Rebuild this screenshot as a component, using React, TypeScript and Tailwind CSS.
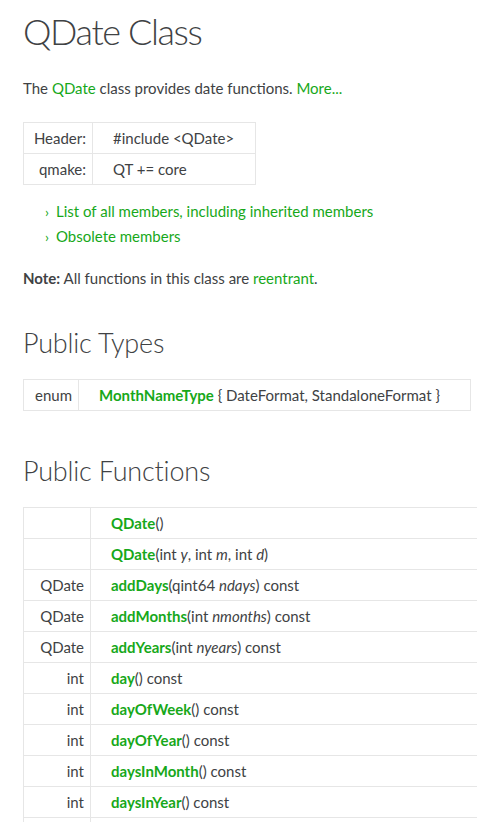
const font = { fontFamily: "Lato, 'Open Sans', sans-serif" };

type Fn = { ret: string; parts: (string | { i: string } | { b: string })[] };

const functions: Fn[] = [
  { ret: "", parts: [{ b: "QDate" }, "()"] },
  { ret: "", parts: [{ b: "QDate" }, "(int ", { i: "y" }, ", int ", { i: "m" }, ", int ", { i: "d" }, ")"] },
  { ret: "QDate", parts: [{ b: "addDays" }, "(qint64 ", { i: "ndays" }, ") const"] },
  { ret: "QDate", parts: [{ b: "addMonths" }, "(int ", { i: "nmonths" }, ") const"] },
  { ret: "QDate", parts: [{ b: "addYears" }, "(int ", { i: "nyears" }, ") const"] },
  { ret: "int", parts: [{ b: "day" }, "() const"] },
  { ret: "int", parts: [{ b: "dayOfWeek" }, "() const"] },
  { ret: "int", parts: [{ b: "dayOfYear" }, "() const"] },
  { ret: "int", parts: [{ b: "daysInMonth" }, "() const"] },
  { ret: "int", parts: [{ b: "daysInYear" }, "() const"] },
  { ret: "", parts: [] },
];

export default function App() {
  return (
    <div className="h-[822px] bg-white text-[#404244] overflow-hidden" style={font}>
      <div className="pl-[23px]">
        {/* Title */}
        <h1 className="pt-[9px] text-[36px] font-light leading-[44px] tracking-[-1.4px]">QDate Class</h1>

        <p className="mt-[23px] text-[15px] leading-[24px]">
          The <a className="text-[#17a81a]">QDate</a> class provides date functions.{" "}
          <a className="text-[#17a81a]">More...</a>
        </p>

        {/* Header / qmake */}
        <table className="mt-[22px] border-collapse text-[15px]">
          <tbody>
            <tr className="h-[31px]">
              <td className="border border-[#e6e6e6] w-[69px] text-right pr-[6px]">Header:</td>
              <td className="border border-[#e6e6e6] w-[163px] pl-[20px]">#include &lt;QDate&gt;</td>
            </tr>
            <tr className="h-[31px]">
              <td className="border border-[#e6e6e6] text-right pr-[6px]">qmake:</td>
              <td className="border border-[#e6e6e6] pl-[20px]">QT += core</td>
            </tr>
          </tbody>
        </table>

        <ul className="mt-[14px] pl-[22px] text-[15px] text-[#17a81a]">
          <li className="flex items-center h-[25px]">
            <span className="w-[11px] text-[14px]">›</span>List of all members, including inherited members
          </li>
          <li className="flex items-center h-[25px]">
            <span className="w-[11px] text-[14px]">›</span>Obsolete members
          </li>
        </ul>

        <p className="mt-[17px] text-[15px] leading-[24px]">
          <b className="font-bold">Note:</b> All functions in this class are{" "}
          <a className="text-[#17a81a]">reentrant</a>.
        </p>

        <h2 className="mt-[35px] text-[27px] font-light leading-[36px] tracking-[-0.2px]">Public Types</h2>

        <table className="mt-[18px] border-collapse text-[15px] w-[448px]">
          <tbody>
            <tr className="h-[31px]">
              <td className="border border-[#e6e6e6] w-[55px] pl-[11px]">enum</td>
              <td className="border border-[#e6e6e6] pl-[20px]">
                <a className="font-bold text-[#17a81a]">MonthNameType</a> {"{"} DateFormat, StandaloneFormat {"}"}
              </td>
            </tr>
          </tbody>
        </table>

        <h2 className="mt-[42px] text-[27px] font-light leading-[36px] tracking-[-0.2px]">Public Functions</h2>

        <table className="mt-[18px] border-collapse text-[15px] w-[470px]">
          <tbody>
            {functions.map((f, i) => (
              <tr key={i} className="h-[31px]">
                <td className="border border-[#e6e6e6] w-[67px] text-right pr-[6px] whitespace-nowrap">{f.ret}</td>
                <td className="border border-[#e6e6e6] border-r-0 pl-[20px] whitespace-nowrap">
                  {f.parts.map((p, j) =>
                    typeof p === "string" ? (
                      <span key={j}>{p}</span>
                    ) : "b" in p ? (
                      <a key={j} className="font-bold text-[#17a81a]">{p.b}</a>
                    ) : (
                      <i key={j}>{p.i}</i>
                    )
                  )}
                </td>
              </tr>
            ))}
          </tbody>
        </table>
      </div>
    </div>
  );
}
